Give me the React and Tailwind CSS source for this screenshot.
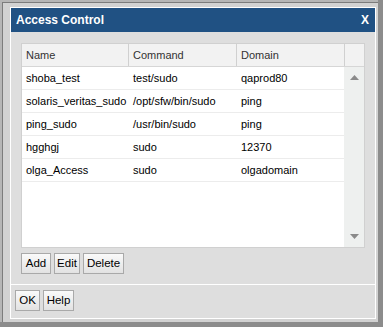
import React from "react";

const rows = [
  { name: "shoba_test", command: "test/sudo", domain: "qaprod80" },
  { name: "solaris_veritas_sudo", command: "/opt/sfw/bin/sudo", domain: "ping" },
  { name: "ping_sudo", command: "/usr/bin/sudo", domain: "ping" },
  { name: "hgghgj", command: "sudo", domain: "12370" },
  { name: "olga_Access", command: "sudo", domain: "olgadomain" },
];

const Btn = ({ children, className = "" }) => (
  <button
    className={`h-[21px] border border-[#a9a9a9] bg-gradient-to-b from-[#fafafa] to-[#e2e2e2] text-[11.5px] text-black leading-none ${className}`}
  >
    {children}
  </button>
);

const App = () => {
  return (
    <div
      className="w-[383px] h-[327px] bg-[#8c8c8c] pr-[5px] pb-[5px]"
      style={{ fontFamily: '"Liberation Sans", Arial, sans-serif' }}
    >
      <div className="h-full bg-[#b6b6b6] pl-[2px] pt-[2px]">
        <div className="h-full border-l border-t border-[#7c7c7c] bg-[#d2d2d2] pl-[7px] pt-[4px] pr-[2px] pb-[3px]">
          <div className="h-full border border-white bg-[#dedede] flex flex-col">
            <div className="h-[24px] bg-[#205183] flex items-center justify-between pl-[5px] pr-[6px] shrink-0">
              <span className="text-white font-bold text-[12px]">Access Control</span>
              <span className="text-white font-bold text-[12px]">X</span>
            </div>

            <div className="pl-[10px] pr-[10px] pt-[11px]">
              <div className="h-[205px] border border-[#d0d0d0] bg-white flex flex-col">
                <div className="h-[23px] bg-[#f2f2f2] border-b border-[#d6d6d6] flex text-[11px] text-[#333] shrink-0">
                  <div className="w-[107px] pl-[4px] flex items-center border-r border-[#d0d0d0]">Name</div>
                  <div className="w-[108px] pl-[4px] flex items-center border-r border-[#d0d0d0]">Command</div>
                  <div className="w-[108px] pl-[4px] flex items-center border-r border-[#d0d0d0]">Domain</div>
                </div>
                <div className="flex-1 flex">
                  <div className="flex-1 flex flex-col">
                    {rows.map((r, i) => (
                      <div key={i} className="h-[23px] border-b border-[#ececec] flex items-center text-[11px] text-black">
                        <div className="w-[107px] pl-[4px] whitespace-nowrap">{r.name}</div>
                        <div className="w-[108px] pl-[4px] whitespace-nowrap">{r.command}</div>
                        <div className="w-[104px] pl-[4px] whitespace-nowrap">{r.domain}</div>
                      </div>
                    ))}
                  </div>
                  <div className="w-[20px] bg-[#eef0ef] flex flex-col items-center justify-between pt-[8px] pb-[8px]">
                    <svg width="9" height="5" viewBox="0 0 9 5">
                      <path d="M4.5 0 L9 5 L0 5 Z" fill="#8a8a8a" />
                    </svg>
                    <svg width="9" height="5" viewBox="0 0 9 5">
                      <path d="M0 0 L9 0 L4.5 5 Z" fill="#8a8a8a" />
                    </svg>
                  </div>
                </div>
              </div>

              <div className="flex gap-[3px] pt-[5px] pb-[10px]">
                <Btn className="w-[30px]">Add</Btn>
                <Btn className="w-[26px]">Edit</Btn>
                <Btn className="w-[41px]">Delete</Btn>
              </div>
            </div>

            <div className="border-t border-white flex gap-[3px] pl-[4px] pt-[5px]">
              <Btn className="w-[25px]">OK</Btn>
              <Btn className="w-[31px]">Help</Btn>
            </div>
          </div>
        </div>
      </div>
    </div>
  );
};

export default App;
